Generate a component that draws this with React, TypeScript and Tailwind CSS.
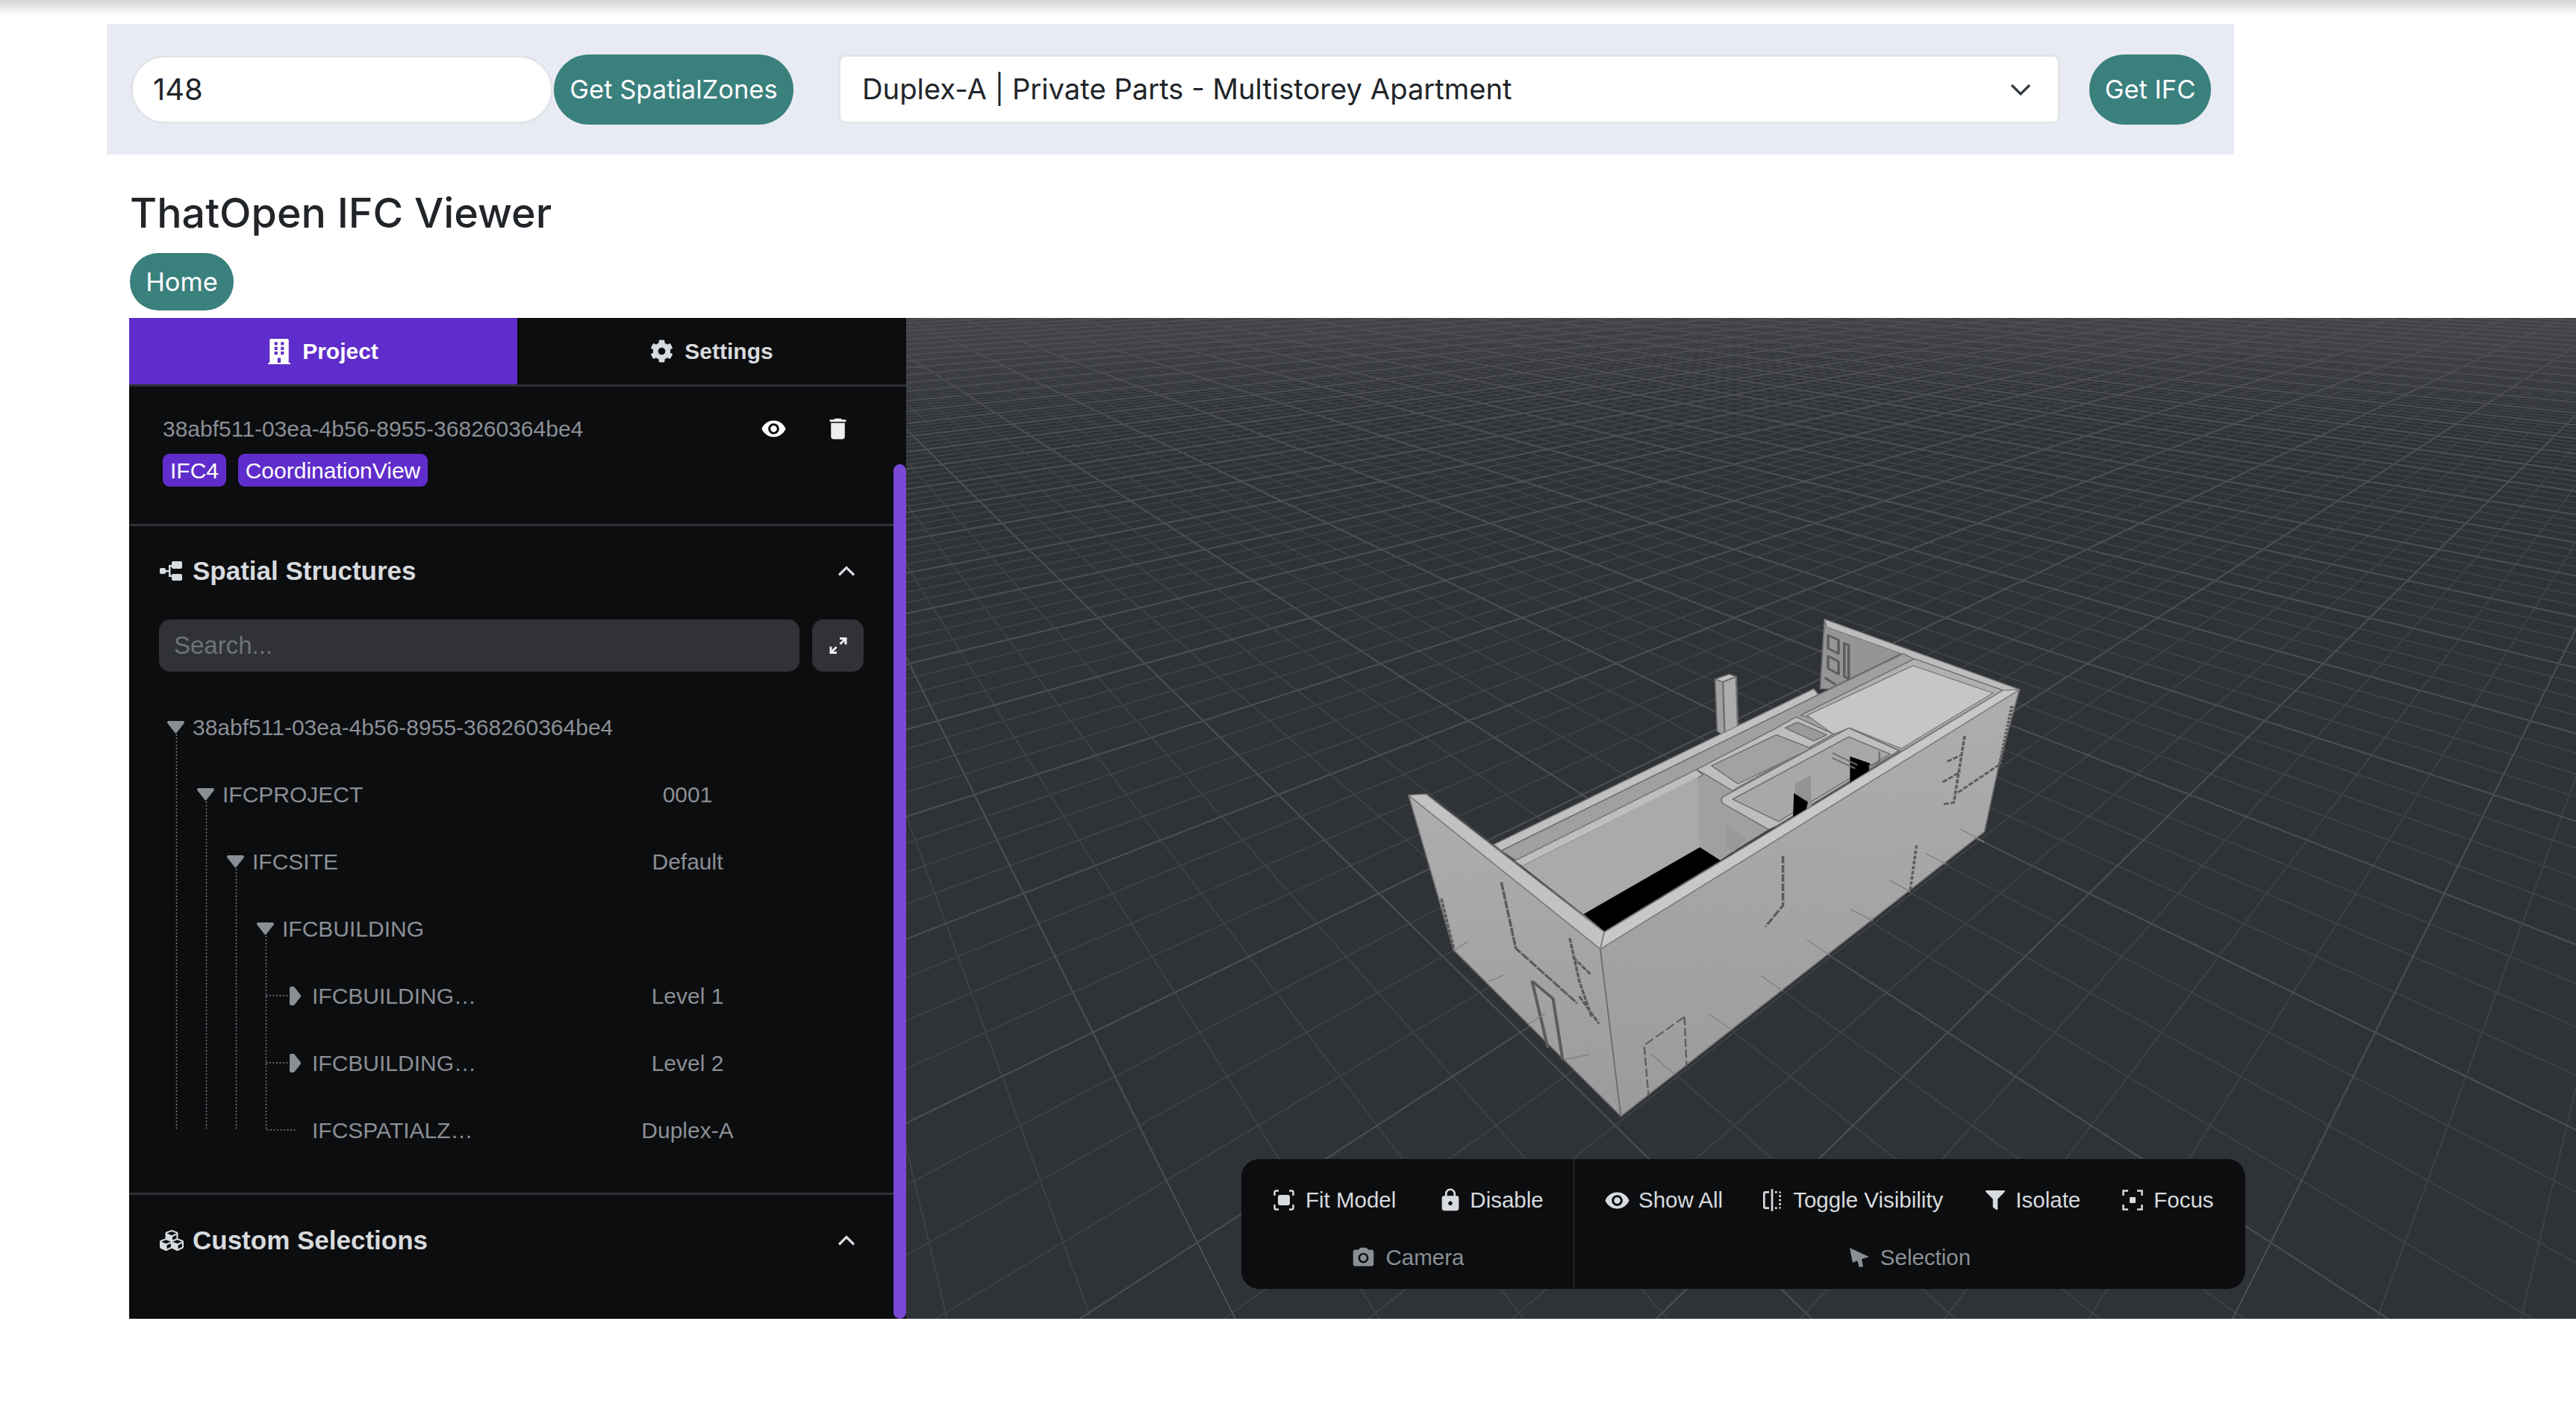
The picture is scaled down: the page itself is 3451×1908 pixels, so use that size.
import { FaBuilding, FaCog, FaCubes, FaFilter } from 'react-icons/fa';
import { MdDelete, MdFlip, MdLock, MdPhotoCamera, MdVisibility } from 'react-icons/md';

// ground grid of the viewer, worked out from the perspective in the scene
const project = (i: number, j: number) => {
    const w = 0.000908 - 0.0000462 * (j - i);
    return [2323 - 1214 + (0.065 * (i + j - 12)) / w, 282 - 426 + 1 / w];
};

const gridLines = () => {
    const minor: string[] = [];
    const major: string[] = [];
    for (let n = -135; n <= 145; n++) {
        const [ax, ay] = project(n - 15, n);
        const [bx, by] = project(n + 132, n);
        const [cx, cy] = project(n, n + 15);
        const [dx, dy] = project(n, n - 132);
        const a = `M${ax.toFixed(1)} ${ay.toFixed(1)}L${bx.toFixed(1)} ${by.toFixed(1)}`;
        const b = `M${cx.toFixed(1)} ${cy.toFixed(1)}L${dx.toFixed(1)} ${dy.toFixed(1)}`;
        (n % 4 === 0 ? major : minor).push(a, b);
    }
    return { minor: minor.join(''), major: major.join('') };
};

const grid = gridLines();

const Building = () => (
    <svg x={626} y={374} width={920} height={720} viewBox="0 0 1568 1568" preserveAspectRatio="none">
        <defs>
            <linearGradient id="wall" x1="0" y1="0" x2="0" y2="1">
                <stop offset="0" stopColor="#aeaeae" />
                <stop offset="1" stopColor="#9b9b9b" />
            </linearGradient>
        </defs>
        <g strokeLinejoin="round">
            {/* far wall and its window */}
            <polygon points="1030,65 1205,165 1040,268 1020,268" fill="#959595" stroke="#6f6f6f" strokeWidth="3" />
            <polygon points="1030,65 1475,270 1437,275 1235,182 1205,165 1035,88" fill="#bdbdbd" stroke="#7f7f7f" strokeWidth="3" />
            <path d="M1038 112L1062 125V165L1038 150ZM1038 172L1062 188V225L1038 208ZM1075 135L1085 140V240L1075 232ZM1030 235L1055 255" fill="none" stroke="#5e5e5e" strokeWidth="6" />
            {/* column */}
            <polygon points="780,240 812,225 828,232 798,248" fill="#c0c0c0" stroke="#6f6f6f" strokeWidth="3" />
            <polygon points="780,240 798,248 802,405 785,392" fill="#a0a0a0" stroke="#6f6f6f" strokeWidth="3" />
            <polygon points="798,248 828,232 832,385 802,405" fill="#acacac" stroke="#6f6f6f" strokeWidth="4" />
            {/* back wall strips and the floor behind everything */}
            <polygon points="275,722 1005,268 1016,285 292,740" fill="#c0c0c0" stroke="#7f7f7f" strokeWidth="3" />
            <polygon points="292,740 1016,285 1210,165 1236,182 1437,272 900,680 527,975 325,768" fill="#a0a0a0" stroke="#6f6f6f" strokeWidth="3" />
            <polygon points="322,770 738,503 752,520 340,785" fill="#bebebe" stroke="#6f6f6f" strokeWidth="3" />
            {/* roof slab */}
            <polygon points="975,345 1235,180 1437,272 1205,450 1085,380" fill="#b0b0b0" stroke="#6f6f6f" strokeWidth="3" />
            <polygon points="990,345 1232,200 1415,280 1205,442 1088,382 1050,400" fill="#c6c6c6" stroke="#7f7f7f" strokeWidth="3" />
            {/* main room */}
            <polygon points="340,785 740,525 745,730 480,925" fill="#aaaaaa" />
            <polygon points="740,525 895,672 792,768 745,730" fill="#a0a0a0" />
            <polygon points="805,665 850,705 822,745 806,728" fill="#989898" />
            <polygon points="480,925 745,730 792,768 527,975" fill="#000" />
            {/* cross walls and small rooms */}
            <polygon points="738,503 920,382 965,350 1050,400 1005,432 840,550 820,565" fill="#bebebe" stroke="#6f6f6f" strokeWidth="3" />
            <polygon points="772,492 920,402 1000,442 832,545" fill="#a2a2a2" stroke="#6f6f6f" strokeWidth="3" />
            <polygon points="940,382 968,365 1035,402 1005,420" fill="#9a9a9a" stroke="#6f6f6f" strokeWidth="3" />
            <polygon points="795,585 1085,382 1200,448 920,668 902,678 795,600" fill="#bebebe" stroke="#6f6f6f" strokeWidth="3" />
            <polygon points="820,590 1085,408 1180,458 925,655" fill="#a8a8a8" stroke="#6f6f6f" strokeWidth="3" />
            <polygon points="962,545 998,520 1000,610 962,640" fill="#939393" />
            <polygon points="960,572 992,598 988,622 958,642" fill="#000" />
            <polygon points="1088,465 1134,485 1130,510 1088,542" fill="#000" />
            <path d="M1048 455L1105 490M1048 470L1100 500M1155 450V480L1130 495" fill="none" stroke="#6f6f6f" strokeWidth="4" />
            {/* outer walls */}
            <polygon points="80,578 518,1027 565,1515 183,1030" fill="url(#wall)" stroke="#6f6f6f" strokeWidth="3" />
            <polygon points="518,1027 1475,270 1428,490 1395,685 565,1515" fill="url(#wall)" stroke="#6f6f6f" strokeWidth="3" />
            <polygon points="80,578 120,575 527,978 518,1027" fill="#c2c2c2" stroke="#7f7f7f" strokeWidth="3" />
            <polygon points="518,1027 527,978 1437,272 1475,270" fill="#c8c8c8" stroke="#7f7f7f" strokeWidth="3" />
            {/* joints and door marks on the walls */}
            <g fill="none" stroke="#5c5c5c" strokeWidth="6">
                <path d="M155 880L183 1025" strokeDasharray="12 3" />
                <path d="M292 832L325 1025L465 1185" strokeDasharray="24 3" />
                <path d="M448 995L470 1120L498 1225M455 1050L495 1100M470 1165L515 1245" strokeDasharray="14 3" />
                <path d="M362 1120L410 1172L432 1350M362 1120L398 1315" strokeWidth="7" />
                <path d="M935 755V900L895 962" strokeDasharray="22 5" />
                <path d="M1240 725L1225 860" strokeDasharray="10 5" />
                <path d="M1350 405L1325 600L1298 605M1310 480L1340 462M1300 540L1340 510M1335 570L1428 490" strokeDasharray="12 4" />
                <path d="M1458 318L1430 490" strokeDasharray="7 4" strokeWidth="8" />
                <path d="M710 1225L618 1308L628 1455M710 1225L715 1370" strokeDasharray="24 8" strokeWidth="4" />
            </g>
            <g fill="none" stroke="#838383" strokeWidth="3">
                <path d="M1338 675L1395 715M1260 748L1310 780M1178 825L1225 860M1088 910L1140 945M990 1000L1042 1045M885 1105L935 1150M765 1215L815 1260M635 1335L685 1390" />
                <path d="M185 1030L215 1005M262 1122L300 1102M355 1245L392 1215M435 1350L493 1335" />
            </g>
        </g>
    </svg>
);

const ToolItem = ({ icon, label, className }: { icon: React.ReactNode; label: string; className: string }) => (
    <div className={`flex items-center ${className}`}>
        {icon}
        <span>{label}</span>
    </div>
);

const FitIcon = () => (
    <svg width="28" height="28" viewBox="0 0 28 28" fill="none" stroke="#d8dbde" strokeWidth="2.5">
        <path d="M1.500 8V3.500a2 2 0 0 1 2-2H7M21 1.500h3.500a2 2 0 0 1 2 2V8M26.500 20v4.500a2 2 0 0 1-2 2H21M7 26.500H3.500a2 2 0 0 1-2-2V20" />
        <rect x="6" y="7" width="16" height="14" rx="3" fill="#d8dbde" stroke="none" />
    </svg>
);

const FocusIcon = () => (
    <svg width="28" height="28" viewBox="0 0 28 28" fill="none" stroke="#d8dbde" strokeWidth="2.5">
        <path d="M1.500 8V1.500H8M20 1.500h6.500V8M26.500 20v6.500H20M8 26.500H1.500V20" />
        <rect x="10" y="10" width="8" height="8" rx="1" fill="#d8dbde" stroke="none" />
    </svg>
);

const TreeIcon = () => (
    <svg width="30" height="26" viewBox="0 0 30 26" fill="#d8dbde">
        <rect x="0" y="9" width="8" height="8" rx="2" />
        <rect x="16" y="0" width="14" height="10" rx="2" />
        <rect x="16" y="17" width="14" height="9" rx="2" />
        <path d="M6 12h6V5h6v2.500h-3.500v11H18V21h-6v-6.500H6z" />
    </svg>
);

const ExpandIcon = () => (
    <svg width="24" height="24" viewBox="0 0 24 24" fill="none" stroke="#eceef0" strokeWidth="3">
        <path d="M14 2.500h8v8M22 2.500L14.500 10M10 21.500H2v-8M2 21.500L9.500 14" />
    </svg>
);

const CursorIcon = () => (
    <svg width="27" height="27" viewBox="0 0 27 27" fill="#8a8f96">
        <path d="M1 0L27 12L17 15L19 25L14 26L11 17L5 20Z" />
    </svg>
);

const Chevron = () => (
    <svg width="24" height="14" viewBox="0 0 24 14" fill="none" stroke="#d8dbde" strokeWidth="3.200">
        <path d="M2 12.500L12 2.500L22 12.500" />
    </svg>
);

const CaretDown = () => (
    <svg width="23" height="17" viewBox="0 0 23 17" fill="#8a8f96">
        <path d="M2 0h19a2 2 0 0 1 1.500 3.300L12.500 16a1.300 1.300 0 0 1-2 0L.5 3.300A2 2 0 0 1 2 0z" />
    </svg>
);

const CaretRight = () => (
    <svg width="15" height="25" viewBox="0 0 15 25" fill="#8a8f96">
        <path d="M2 0h3a2 2 0 0 1 1.500.7L14.500 11a2 2 0 0 1 0 3L6.500 24.300a2 2 0 0 1-1.500.7H2a2 2 0 0 1-2-2V2a2 2 0 0 1 2-2z" />
    </svg>
);

const rows = [
    { pad: 'pl-0', caret: 'down', name: '38abf511-03ea-4b56-8955-368260364be4', value: '' },
    { pad: 'pl-[40px]', caret: 'down', name: 'IFCPROJECT', value: '0001' },
    { pad: 'pl-[80px]', caret: 'down', name: 'IFCSITE', value: 'Default' },
    { pad: 'pl-[120px]', caret: 'down', name: 'IFCBUILDING', value: '' },
    { pad: 'pl-[160px]', caret: 'right', name: 'IFCBUILDING…', value: 'Level 1' },
    { pad: 'pl-[160px]', caret: 'right', name: 'IFCBUILDING…', value: 'Level 2' },
    { pad: 'pl-[160px]', caret: '', name: 'IFCSPATIALZ…', value: 'Duplex-A' },
];

export default function App() {
    return (
        <div className="min-h-[1908px] bg-white font-['Liberation_Sans',Arial,sans-serif]">
            <div className="h-[32px] bg-gradient-to-b from-[#d4d4d4] to-white to-[65%]" />

            <div className="ml-[143px] flex h-[175px] w-[2850px] items-center bg-[#e9ebf4] pl-[32px] font-['Inter',sans-serif] text-[34.500px]">
                <div className="flex h-[92px] w-[566px] items-center rounded-[46px] border-[3px] border-[#e2e4ea] bg-white pl-[27px] text-[40px] text-[#212529]">
                    148
                </div>
                <button className="ml-[1px] h-[94px] w-[321px] rounded-[47px] bg-[#3a807d] text-white">Get SpatialZones</button>
                <div className="ml-[60px] flex h-[93px] w-[1637px] items-center justify-between rounded-[10px] border-[3px] border-[#e2e4ea] bg-white pl-[29px] pr-[36px] text-[38.200px] text-[#212529]">
                    <span>Duplex-A | Private Parts - Multistorey Apartment</span>
                    <svg width="28" height="16" viewBox="0 0 28 16" fill="none" stroke="#343a40" strokeWidth="3.200">
                        <path d="M2 2L14 14L26 2" />
                    </svg>
                </div>
                <button className="ml-[39px] h-[94px] w-[163px] rounded-[47px] bg-[#3a807d] text-white">Get IFC</button>
            </div>

            <div className="ml-[174px] font-['Inter',sans-serif]">
                <h2 className="mt-[38px] h-[80px] text-[55.500px] font-medium leading-[80px] text-[#212529]">ThatOpen IFC Viewer</h2>
                <button className="mt-[14px] h-[77px] w-[139px] rounded-[38px] bg-[#3a807d] text-[34.500px] text-white">Home</button>
            </div>

            <div className="mt-[10px] flex h-[1341px] pl-[173px]">
                <aside className="relative w-[1041px] shrink-0 bg-[#0c0d0f]">
                    <div className="flex h-[92px] border-b-[3px] border-[#2e3034] text-[30px] font-bold">
                        <div className="flex w-[520px] items-center justify-center gap-[14px] bg-[#5f2dcb] pr-[2px] text-white">
                            <FaBuilding size={34} />
                            Project
                        </div>
                        <div className="flex flex-1 items-center justify-center gap-[15px] text-[#d8dbde]">
                            <FaCog size={31} />
                            Settings
                        </div>
                    </div>

                    <div className="w-[1024px]">
                        <div className="h-[187px] border-b-[3px] border-[#2e3034] pl-[45px] pr-[56px] pt-[36px]">
                            <div className="flex h-[40px] items-center justify-between text-[30px] text-[#8a8f96]">
                                <span>38abf511-03ea-4b56-8955-368260364be4</span>
                                <div className="flex items-center gap-[50px] text-white">
                                    <MdVisibility size={35} />
                                    <MdDelete size={37} className="text-[#eceef0]" />
                                </div>
                            </div>
                            <div className="mt-[14px] flex gap-[16px] text-[30px] text-white">
                                <span className="flex h-[44px] w-[85px] items-center justify-center rounded-[9px] bg-[#5f2dcb]">IFC4</span>
                                <span className="flex h-[44px] w-[254px] items-center justify-center rounded-[9px] bg-[#5f2dcb]">CoordinationView</span>
                            </div>
                        </div>

                        <div className="h-[896px] border-b-[3px] border-[#2e3034]">
                            <div className="mb-[5px] flex h-[120px] items-center justify-between pl-[41px] pr-[51px] text-[35px] font-bold text-[#d8dbde]">
                                <div className="flex items-center gap-[14px]">
                                    <TreeIcon />
                                    Spatial Structures
                                </div>
                                <Chevron />
                            </div>
                            <div className="flex h-[70px] gap-[17px] pl-[40px]">
                                <div className="flex w-[858px] items-center rounded-[15px] bg-[#303236] pl-[20px] text-[33px] text-[#6f7377]">Search...</div>
                                <div className="flex w-[69px] items-center justify-center rounded-[15px] bg-[#303236]">
                                    <ExpandIcon />
                                </div>
                            </div>
                            <div className="relative mt-[29px] pl-[40px] text-[30px] text-[#8a8f96]">
                                <svg className="absolute left-0 top-0" width="400" height="630" fill="none" stroke="#7d8186" strokeWidth="1.500" strokeDasharray="2 2.500">
                                    <path d="M63.500 55V585M103.500 145V585M143.500 235V585M183.500 325V585H223M183.500 405H216M183.500 495H216" />
                                </svg>
                                {rows.map((row, idx) => (
                                    <div key={idx} className={`flex h-[90px] items-center ${row.pad}`}>
                                        <div className="flex w-[45px] shrink-0 items-center justify-center pr-[1px]">
                                            {row.caret === 'down' && <CaretDown />}
                                            {row.caret === 'right' && <CaretRight />}
                                        </div>
                                        <span className="relative whitespace-nowrap">{row.name}</span>
                                        {row.value && (
                                            <span className="absolute left-[608px] w-[280px] text-center">{row.value}</span>
                                        )}
                                    </div>
                                ))}
                            </div>
                        </div>

                        <div className="flex h-[122px] items-center justify-between pl-[41px] pr-[51px] text-[35px] font-bold text-[#d8dbde]">
                            <div className="flex items-center gap-[12px]">
                                <FaCubes size={32} />
                                Custom Selections
                            </div>
                            <Chevron />
                        </div>
                    </div>

                    {/* scrollbar thumb */}
                    <div className="absolute bottom-0 right-0 top-[196px] w-[17px] rounded-full bg-[#7749d4]" />
                </aside>

                <main className="relative flex-1 overflow-hidden bg-[#2f3237]">
                    <svg className="absolute inset-0" width="2237" height="1341" fill="none">
                        <path d={grid.minor} stroke="#404246" strokeWidth="1.800" />
                        <path d={grid.major} stroke="#4b4d51" strokeWidth="2.300" />
                        <Building />
                    </svg>

                    {/* floating toolbar */}
                    <div className="absolute left-[449px] top-[1127px] flex h-[174px] w-[1345px] rounded-[24px] bg-[#0c0d0f] text-[29.500px]">
                        <div className="flex w-[446px] flex-col border-r border-[#3a3c40]">
                            <div className="flex h-[110px] items-center pl-[43px] text-[#d8dbde]">
                                <ToolItem className="gap-[15px]" icon={<FitIcon />} label="Fit Model" />
                                <ToolItem className="ml-[56px] gap-[9px]" icon={<MdLock size={34} />} label="Disable" />
                            </div>
                            <div className="flex items-center justify-center gap-[14px] text-[#8a8f96]">
                                <MdPhotoCamera size={33} />
                                Camera
                            </div>
                        </div>
                        <div className="flex flex-1 flex-col">
                            <div className="flex h-[110px] items-center pl-[40px] text-[#d8dbde]">
                                <ToolItem className="gap-[11px]" icon={<MdVisibility size={35} />} label="Show All" />
                                <ToolItem className="ml-[50px] gap-[12px]" icon={<MdFlip size={32} />} label="Toggle Visibility" />
                                <ToolItem className="ml-[57px] gap-[14px]" icon={<FaFilter size={26} />} label="Isolate" />
                                <ToolItem className="ml-[56px] gap-[14px]" icon={<FocusIcon />} label="Focus" />
                            </div>
                            <div className="flex items-center justify-center gap-[15px] text-[#8a8f96]">
                                <CursorIcon />
                                Selection
                            </div>
                        </div>
                    </div>
                </main>
            </div>
        </div>
    );
}
